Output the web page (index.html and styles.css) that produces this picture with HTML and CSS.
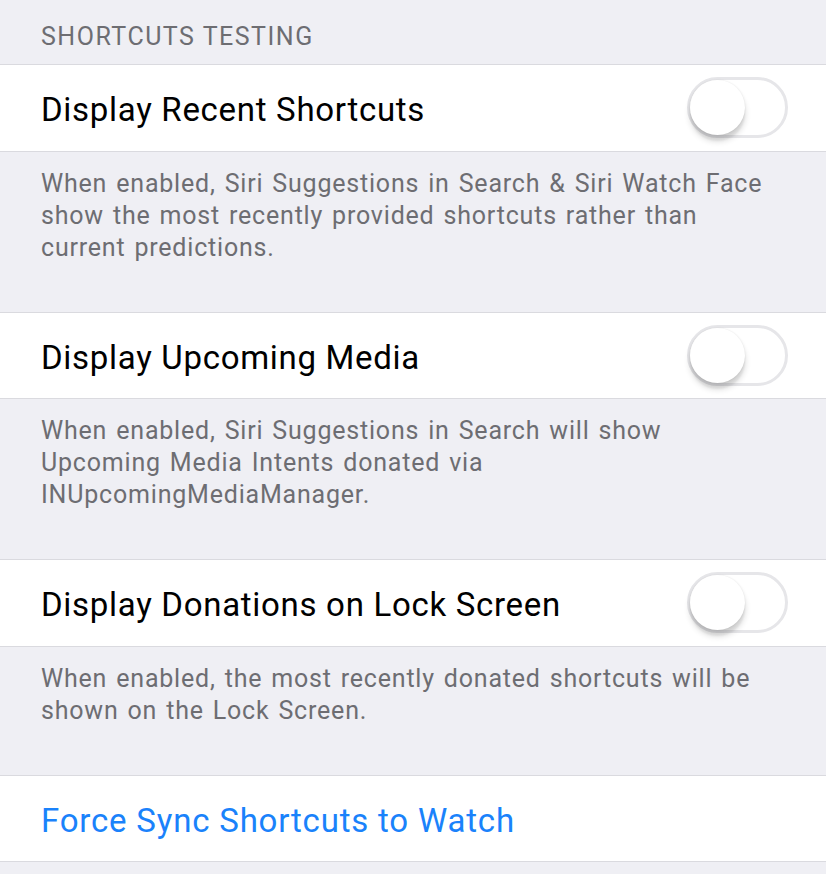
FILE: index.html
```html
<!DOCTYPE html>
<html>
<head>
<meta charset="utf-8">
<link rel="stylesheet" href="styles.css">
</head>
<body>
<div class="page">
  <div class="header">SHORTCUTS TESTING</div>
  <div class="group">
    <div class="row">
      <span class="label">Display Recent Shortcuts</span>
      <span class="switch"><span class="knob"></span></span>
    </div>
  </div>
  <div class="footer">When enabled, Siri Suggestions in Search &amp; Siri Watch Face show the most recently provided shortcuts rather than current predictions.</div>
  <div class="group">
    <div class="row">
      <span class="label">Display Upcoming Media</span>
      <span class="switch"><span class="knob"></span></span>
    </div>
  </div>
  <div class="footer">When enabled, Siri Suggestions in Search will show Upcoming Media Intents donated via INUpcomingMediaManager.</div>
  <div class="group">
    <div class="row">
      <span class="label">Display Donations on Lock Screen</span>
      <span class="switch"><span class="knob"></span></span>
    </div>
  </div>
  <div class="footer">When enabled, the most recently donated shortcuts will be shown on the Lock Screen.</div>
  <div class="group">
    <div class="row">
      <span class="label link">Force Sync Shortcuts to Watch</span>
    </div>
  </div>
</div>
</body>
</html>
```
FILE: styles.css
```css
html, body {
  margin: 0;
  padding: 0;
  background: #efeff4;
}
body {
  font-family: Roboto, "Liberation Sans", sans-serif;
  -webkit-font-smoothing: antialiased;
}
.page {
  width: 826px;
  height: 874px;
  overflow: hidden;
}
.header {
  height: 64px;
  box-sizing: border-box;
  padding: 21px 41px 0;
  font-size: 25px;
  line-height: 32px;
  letter-spacing: 1.5px;
  color: #6d6d72;
}
.group {
  background: #fff;
  border-top: 1px solid #dadadf;
  border-bottom: 1px solid #dadadf;
}
.row {
  height: 85.5px;
  display: flex;
  align-items: center;
  justify-content: space-between;
  padding: 0 38px 0 41px;
}
.label {
  font-size: 33px;
  letter-spacing: 0.7px;
  padding-top: 4px;
  color: #000;
}
.link {
  color: #1a82fb;
  letter-spacing: 0.8px;
}
.footer {
  box-sizing: border-box;
  padding: 16px 40px 48px 41px;
  font-size: 25px;
  line-height: 32px;
  letter-spacing: 0.8px;
  word-spacing: 2px;
  color: #6d6d72;
}
.switch {
  position: relative;
  width: 101px;
  height: 61px;
  box-sizing: border-box;
  border: 3px solid #e6e6e9;
  border-radius: 31px;
  background: #fff;
}
.knob {
  position: absolute;
  left: 0;
  top: 0;
  width: 55px;
  height: 55px;
  border-radius: 50%;
  background: #fff;
  box-shadow: 0 6px 6px rgba(0,0,0,0.16), 0 0 2px rgba(0,0,0,0.1), 0 6px 2px rgba(0,0,0,0.05);
}
```
